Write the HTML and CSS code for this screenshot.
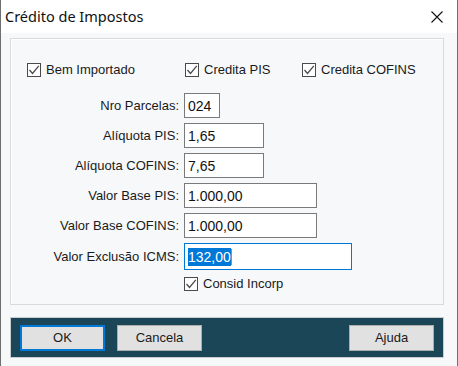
FILE: index.html
```html
<!DOCTYPE html>
<html lang="pt-BR">

<head>
    <meta charset="UTF-8">
    <title>Crédito de Impostos</title>
    <link rel="stylesheet" href="styles.css">
</head>

<body>
    <div class="window">
        <!-- Title bar -->
        <div class="titlebar">
            <span class="title">Crédito de Impostos</span>
            <svg class="close" width="12" height="12" viewBox="0 0 12 12">
                <path d="M0.5 0.5 L11.5 11.5 M11.5 0.5 L0.5 11.5" stroke="#111" stroke-width="1.1" fill="none" />
            </svg>
        </div>

        <div class="content">
            <div class="group">
                <!-- Options -->
                <div class="check-row">
                    <label class="check check-bem"><span class="box"><svg viewBox="0 0 12 12"><path d="M1.5 6 L4.5 9.5 L10.8 1.8" /></svg></span>Bem Importado</label>
                    <label class="check check-pis"><span class="box"><svg viewBox="0 0 12 12"><path d="M1.5 6 L4.5 9.5 L10.8 1.8" /></svg></span>Credita PIS</label>
                    <label class="check"><span class="box"><svg viewBox="0 0 12 12"><path d="M1.5 6 L4.5 9.5 L10.8 1.8" /></svg></span>Credita COFINS</label>
                </div>

                <!-- Fields -->
                <div class="fields">
                    <label>Nro Parcelas:</label>
                    <div class="field w-xs">024</div>

                    <label>Alíquota PIS:</label>
                    <div class="field w-sm">1,65</div>

                    <label>Alíquota COFINS:</label>
                    <div class="field w-sm">7,65</div>

                    <label>Valor Base PIS:</label>
                    <div class="field w-md">1.000,00</div>

                    <label>Valor Base COFINS:</label>
                    <div class="field w-md">1.000,00</div>

                    <label>Valor Exclusão ICMS:</label>
                    <div class="field w-lg focused"><span class="selected">132,00</span><span class="caret"></span></div>

                    <span></span>
                    <label class="check"><span class="box"><svg viewBox="0 0 12 12"><path d="M1.5 6 L4.5 9.5 L10.8 1.8" /></svg></span>Consid Incorp</label>
                </div>
            </div>

            <!-- Buttons -->
            <div class="buttons">
                <button class="btn default">OK</button>
                <button class="btn">Cancela</button>
                <span class="spacer"></span>
                <button class="btn">Ajuda</button>
            </div>
        </div>
    </div>
</body>

</html>
```

FILE: styles.css
```css
* {
    box-sizing: border-box;
}

body {
    margin: 0;
    font-family: "Liberation Sans", Arial, sans-serif;
    font-size: 13px;
    color: #1a1a1a;
}

.window {
    width: 458px;
    height: 366px;
    border-left: 1px solid #6f6f6f;
    border-right: 1px solid #6f6f6f;
    background: #f7f8fa;
    display: flex;
    flex-direction: column;
}

.titlebar {
    height: 33px;
    background: #fff;
    display: flex;
    align-items: center;
    padding: 0 14px 1px 4px;
}

.title {
    font-family: "Noto Sans", sans-serif;
    font-size: 14.5px;
    color: #111;
    flex: 1;
}

.close {
    margin-top: 2px;
}

.content {
    flex: 1;
    padding: 5px 13px 0 9px;
}

.group {
    height: 267px;
    border: 1px solid #dadada;
    box-shadow: inset 1px 1px 0 #fff;
    padding: 23px 0 0 16px;
}

.check-row {
    display: flex;
    height: 15px;
    align-items: center;
}

.check {
    display: flex;
    align-items: center;
    white-space: nowrap;
}

.check-bem {
    width: 158px;
}

.check-pis {
    width: 117px;
}

.box {
    width: 14px;
    height: 14px;
    border: 1px solid #4a4a4a;
    background: #fff;
    margin-right: 5px;
    display: flex;
}

.box svg {
    width: 12px;
    height: 12px;
    fill: none;
    stroke: #4a4a4a;
    stroke-width: 1.3;
}

.fields {
    display: grid;
    grid-template-columns: 152px auto;
    column-gap: 5px;
    row-gap: 5px;
    margin-top: 16px;
    align-items: center;
}

.fields > label {
    text-align: right;
}

.field {
    height: 25px;
    border: 1px solid #7a7a7a;
    background: #fff;
    padding: 0 2px 0 3px;
    font-size: 14px;
    display: flex;
    align-items: center;
    color: #111;
}

.w-xs {
    width: 36px;
}

.w-sm {
    width: 80px;
}

.w-md {
    width: 133px;
}

.w-lg {
    width: 168px;
    height: 27px;
}

.focused {
    border-color: #0078d7;
}

.selected {
    background: #0078d7;
    color: #fff;
    line-height: 18px;
}

.caret {
    width: 1px;
    height: 16px;
    background: #e07a20;
}

.fields .check {
    margin-top: 1px;
}

.buttons {
    margin-top: 12px;
    height: 41px;
    background: #1a4658;
    border: 1px solid #c9cdd0;
    display: flex;
    align-items: center;
    padding: 0 9px;
    gap: 12px;
}

.spacer {
    flex: 1;
}

.btn {
    width: 85px;
    height: 26px;
    background: #e1e1e1;
    border: 1px solid #adadad;
    font-family: "Liberation Sans", Arial, sans-serif;
    font-size: 13px;
    color: #1a1a1a;
    padding: 0;
}

.btn.default {
    border: 2px solid #0078d7;
}
```
